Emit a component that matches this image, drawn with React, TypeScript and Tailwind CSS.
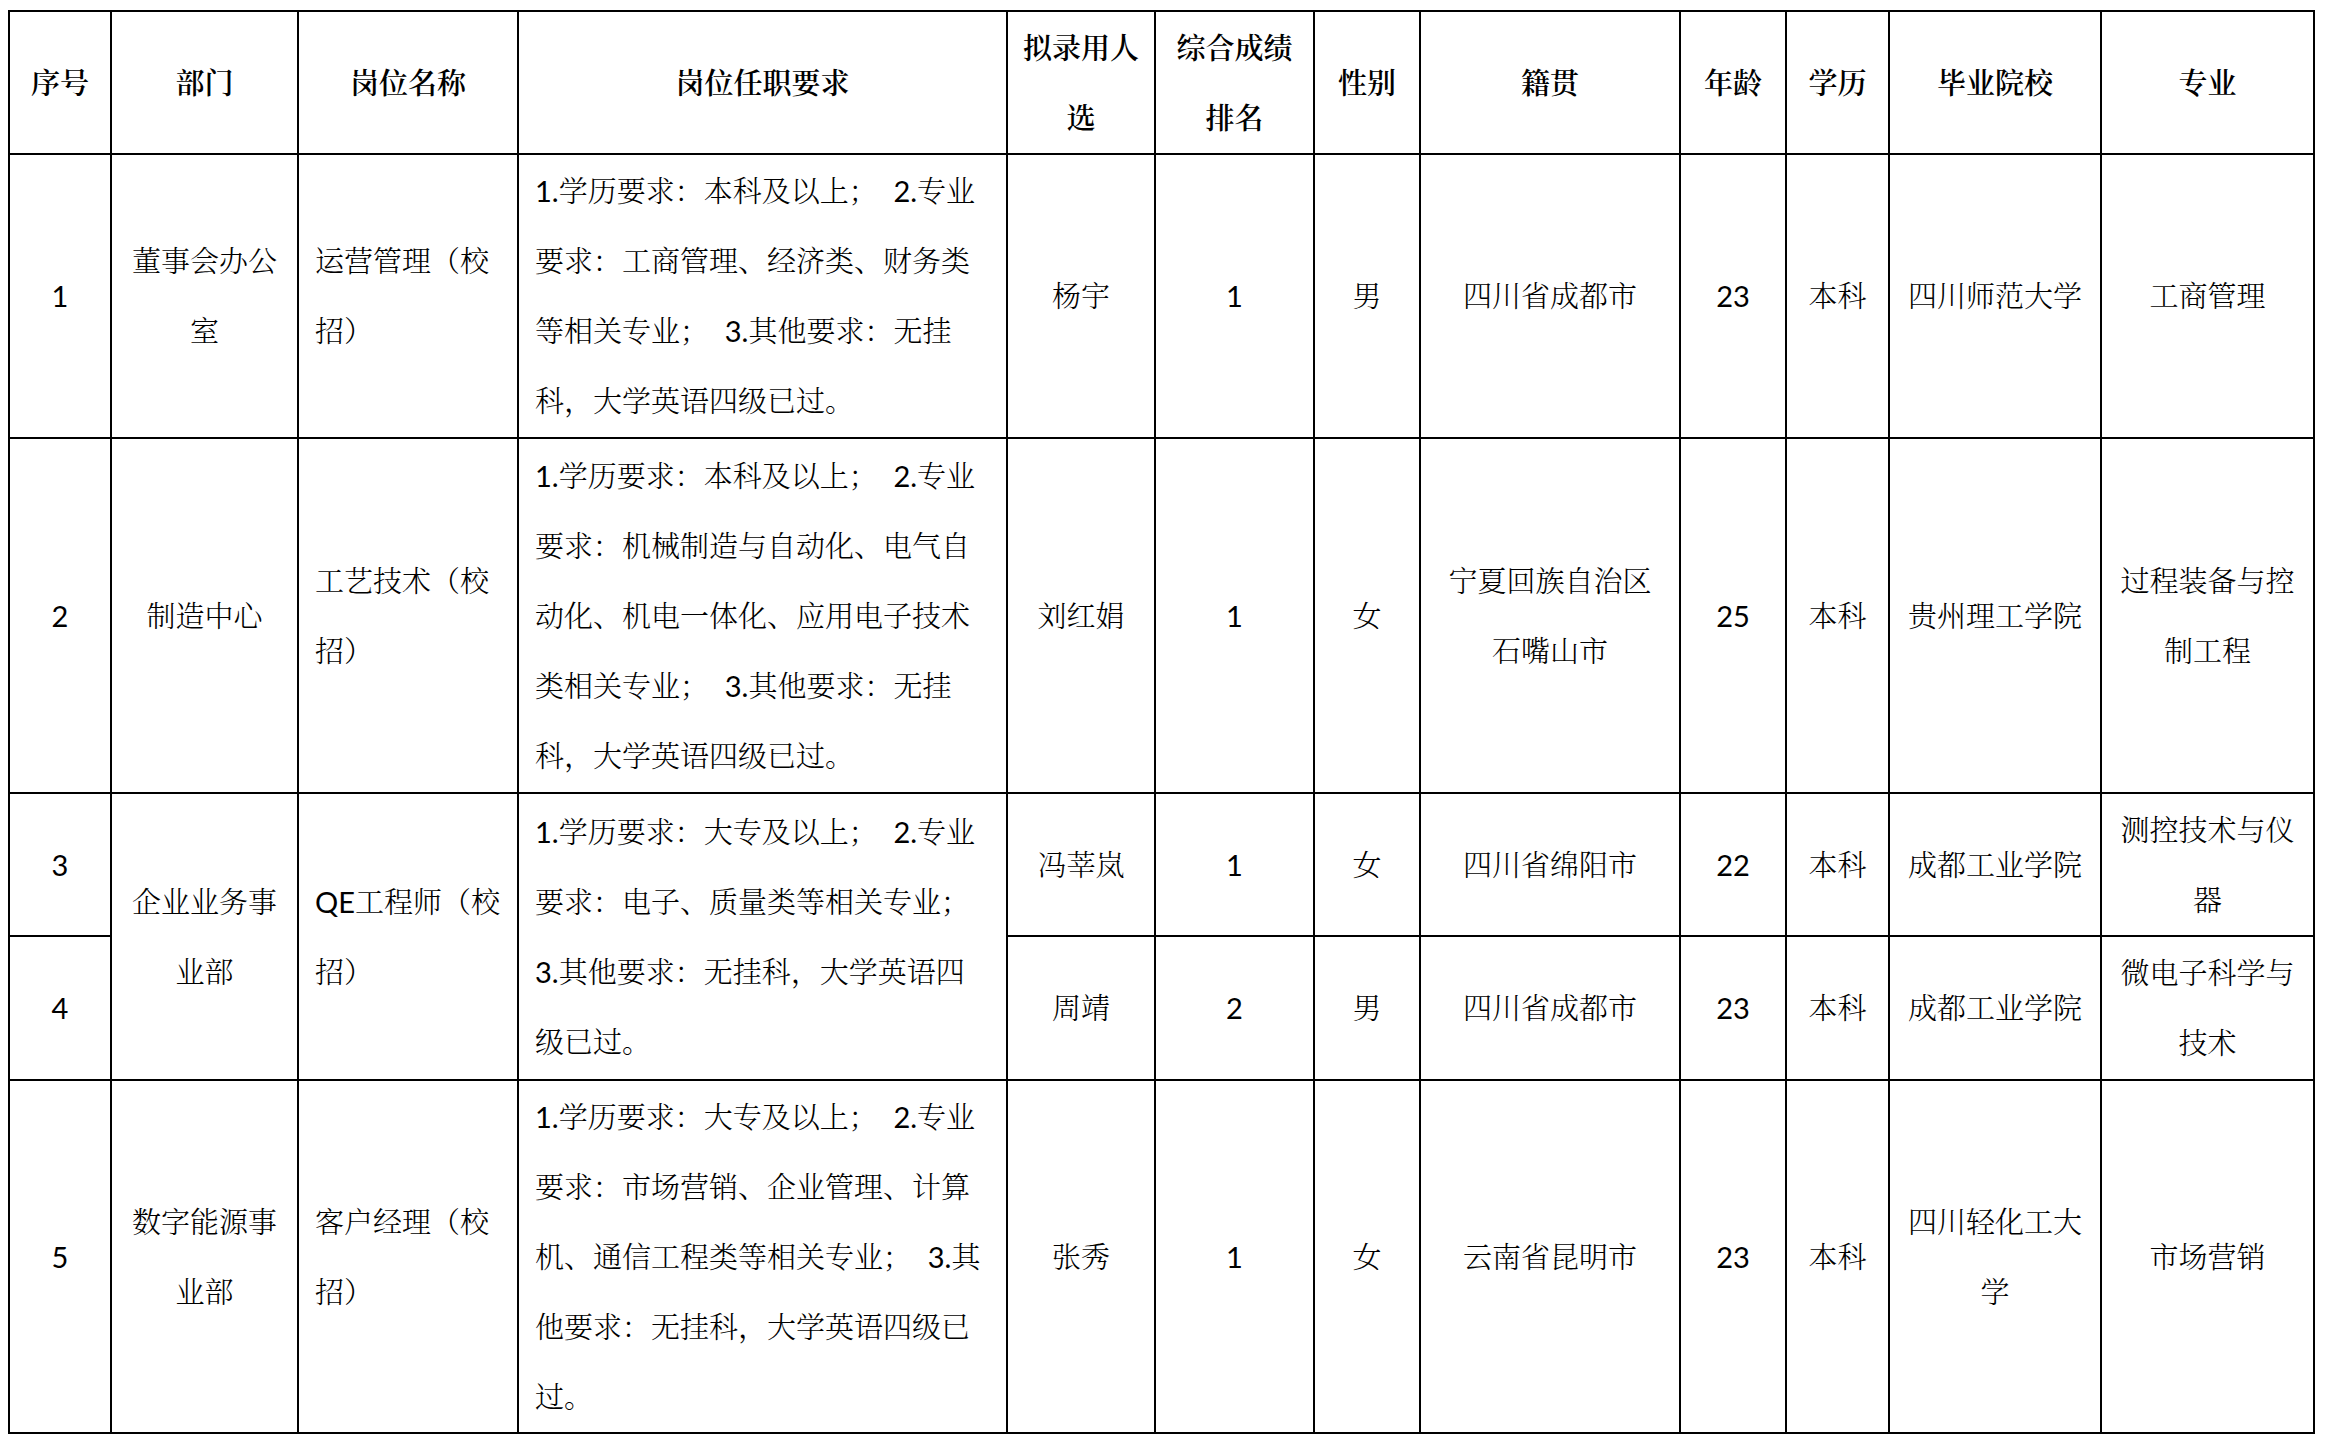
import React from "react";

const font = "font-['Lato','Noto_Serif_CJK_SC','Noto_Sans_CJK_SC',serif]";

const th = "border-2 border-black text-center align-middle font-semibold p-0 whitespace-nowrap";
const td = "border-2 border-black text-center align-middle p-0 whitespace-nowrap";
const tdn = "border-2 border-black text-center align-middle p-0 whitespace-nowrap font-normal";
const tdl = "border-2 border-black text-left align-middle p-0 pl-[16px] whitespace-pre";

type Row = {
  no: string;
  name: string;
  rank: string;
  sex: string;
  origin: React.ReactNode;
  age: string;
  edu: string;
  school: React.ReactNode;
  major: React.ReactNode;
};

function Mixed({ text }: { text: string }) {
  const parts = text.split(/([0-9A-Z.]+)/);
  return (
    <>
      {parts.map((p, i) =>
        /^[0-9A-Z.]+$/.test(p) ? (
          <span key={i} className="font-normal">
            {p}
          </span>
        ) : (
          <React.Fragment key={i}>{p}</React.Fragment>
        )
      )}
    </>
  );
}

function Lines({ lines }: { lines: string[] }) {
  return (
    <>
      {lines.map((l, i) => (
        <React.Fragment key={i}>
          <Mixed text={l} />
          {i < lines.length - 1 && <br />}
        </React.Fragment>
      ))}
    </>
  );
}

function Tail({ r }: { r: Row }) {
  return (
    <>
      <td className={td}>{r.name}</td>
      <td className={tdn}>{r.rank}</td>
      <td className={td}>{r.sex}</td>
      <td className={td}>{r.origin}</td>
      <td className={tdn}>{r.age}</td>
      <td className={td}>{r.edu}</td>
      <td className={td}>{r.school}</td>
      <td className={td}>{r.major}</td>
    </>
  );
}

export default function App() {
  const r1: Row = { no: "1", name: "杨宇", rank: "1", sex: "男", origin: "四川省成都市", age: "23", edu: "本科", school: "四川师范大学", major: "工商管理" };
  const r2: Row = { no: "2", name: "刘红娟", rank: "1", sex: "女", origin: <Lines lines={["宁夏回族自治区", "石嘴山市"]} />, age: "25", edu: "本科", school: "贵州理工学院", major: <Lines lines={["过程装备与控", "制工程"]} /> };
  const r3: Row = { no: "3", name: "冯莘岚", rank: "1", sex: "女", origin: "四川省绵阳市", age: "22", edu: "本科", school: "成都工业学院", major: <Lines lines={["测控技术与仪", "器"]} /> };
  const r4: Row = { no: "4", name: "周靖", rank: "2", sex: "男", origin: "四川省成都市", age: "23", edu: "本科", school: "成都工业学院", major: <Lines lines={["微电子科学与", "技术"]} /> };
  const r5: Row = { no: "5", name: "张秀", rank: "1", sex: "女", origin: "云南省昆明市", age: "23", edu: "本科", school: <Lines lines={["四川轻化工大", "学"]} />, major: "市场营销" };

  return (
    <div className={`min-h-[1440px] w-[2326px] bg-white pl-[8px] pt-[10px] text-black ${font} font-light text-[29px] leading-[70px]`}>
      <table className="table-fixed border-collapse w-[2305px]">
        <colgroup>
          <col className="w-[102px]" />
          <col className="w-[187px]" />
          <col className="w-[220px]" />
          <col className="w-[489px]" />
          <col className="w-[148px]" />
          <col className="w-[159px]" />
          <col className="w-[106px]" />
          <col className="w-[260px]" />
          <col className="w-[106px]" />
          <col className="w-[103px]" />
          <col className="w-[212px]" />
          <col className="w-[213px]" />
        </colgroup>
        <tbody>
          <tr className="h-[143px]">
            <td className={th}>序号</td>
            <td className={th}>部门</td>
            <td className={th}>岗位名称</td>
            <td className={th}>岗位任职要求</td>
            <td className={th}>拟录用人<br />选</td>
            <td className={th}>综合成绩<br />排名</td>
            <td className={th}>性别</td>
            <td className={th}>籍贯</td>
            <td className={th}>年龄</td>
            <td className={th}>学历</td>
            <td className={th}>毕业院校</td>
            <td className={th}>专业</td>
          </tr>
          <tr className="h-[284px]">
            <td className={tdn}>1</td>
            <td className={td}>董事会办公<br />室</td>
            <td className={tdl}>运营管理（校<br />招）</td>
            <td className={tdl}>
              <Lines lines={["1.学历要求：本科及以上；  2.专业", "要求：工商管理、经济类、财务类", "等相关专业；  3.其他要求：无挂", "科，大学英语四级已过。"]} />
            </td>
            <Tail r={r1} />
          </tr>
          <tr className="h-[355px]">
            <td className={tdn}>2</td>
            <td className={td}>制造中心</td>
            <td className={tdl}>工艺技术（校<br />招）</td>
            <td className={tdl}>
              <Lines lines={["1.学历要求：本科及以上；  2.专业", "要求：机械制造与自动化、电气自", "动化、机电一体化、应用电子技术", "类相关专业；  3.其他要求：无挂", "科，大学英语四级已过。"]} />
            </td>
            <Tail r={r2} />
          </tr>
          <tr className="h-[143px]">
            <td className={tdn}>3</td>
            <td className={td} rowSpan={2}>企业业务事<br />业部</td>
            <td className={tdl} rowSpan={2}>
              <Mixed text="QE工程师（校" />
              <br />招）
            </td>
            <td className={tdl} rowSpan={2}>
              <Lines lines={["1.学历要求：大专及以上；  2.专业", "要求：电子、质量类等相关专业；", "3.其他要求：无挂科，大学英语四", "级已过。"]} />
            </td>
            <Tail r={r3} />
          </tr>
          <tr className="h-[144px]">
            <td className={tdn}>4</td>
            <Tail r={r4} />
          </tr>
          <tr className="h-[353px]">
            <td className={tdn}>5</td>
            <td className={td}>数字能源事<br />业部</td>
            <td className={tdl}>客户经理（校<br />招）</td>
            <td className={tdl}>
              <Lines lines={["1.学历要求：大专及以上；  2.专业", "要求：市场营销、企业管理、计算", "机、通信工程类等相关专业；  3.其", "他要求：无挂科，大学英语四级已", "过。"]} />
            </td>
            <Tail r={r5} />
          </tr>
        </tbody>
      </table>
    </div>
  );
}
